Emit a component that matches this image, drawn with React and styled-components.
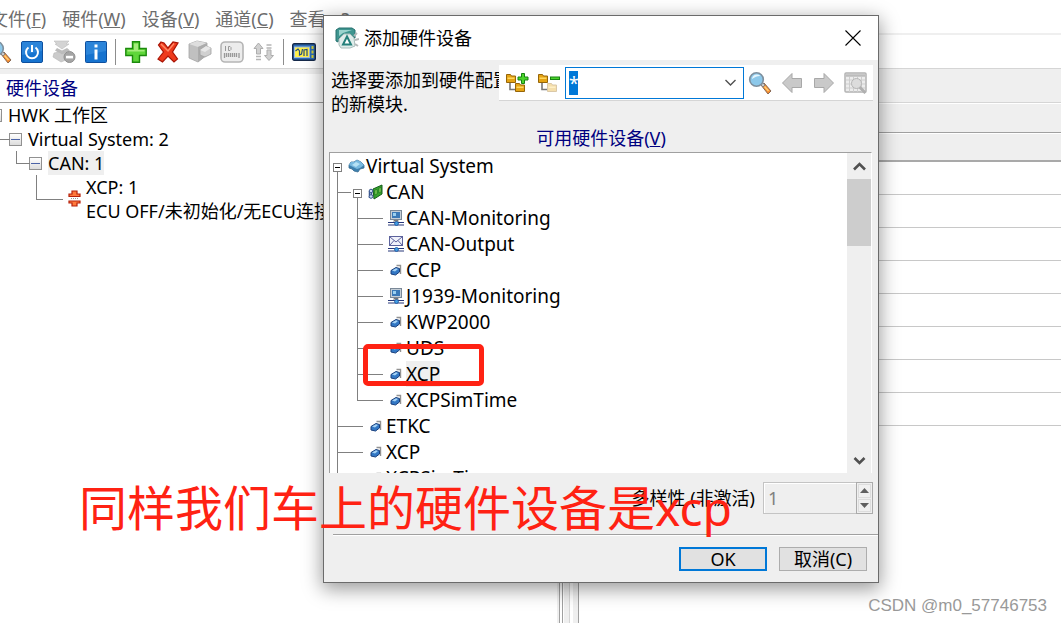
import React from 'react';
import styled, { createGlobalStyle, css } from 'styled-components';

const GlobalStyle = createGlobalStyle`
    * {
        box-sizing: border-box;
    }

    body {
        margin: 0;
        overflow: hidden;
        background: #fff;
        color: #000;
        font-family: 'Noto Sans', 'Noto Sans CJK SC', sans-serif;
        font-size: 18px;
        line-height: 24px;
    }

    button, input {
        font: inherit;
        color: inherit;
    }
`;

/* ---------- icons ---------- */

const SearchIcon = () => (
    <svg width="24" height="24" viewBox="0 0 24 24">
        <path d="M13 14l3-2 7 8-3 3z" fill="#f58a2c" stroke="#8a6a55" strokeWidth="1" />
        <path d="M12 13l2-2 3 3-2 2z" fill="#c9c9c9" stroke="#777" strokeWidth=".8" />
        <path d="M16.500 15.500l4 4.500" stroke="#ffd27a" strokeWidth="1.500" />
        <circle cx="8.500" cy="8.500" r="6.800" fill="#8cc8ea" stroke="#7d8f9d" strokeWidth="1.600" />
        <path d="M4 8a5 5 0 0 1 5-4.500c2 0 3 .8 3 1.500C9 5 7 6 4 8z" fill="#e4f5fd" />
    </svg>
);

const PowerIcon = () => (
    <svg width="22" height="22" viewBox="0 0 22 22">
        <rect x=".5" y=".5" width="21" height="21" rx="1.500" fill="#1673cf" stroke="#0d4f9e" />
        <path d="M1 1h20v9L1 14z" fill="#3b90e0" opacity=".6" />
        <path d="M7.500 6.500a6 6 0 1 0 7 0M11 4v7" fill="none" stroke="#fff" strokeWidth="2" />
    </svg>
);

const LayersOffIcon = () => (
    <svg width="24" height="24" viewBox="0 0 24 24">
        <path d="M2 1h15l-3 3h3l-7 5-7-5h2z" fill="#d4d4d4" stroke="#bdbdbd" strokeWidth=".6" />
        <path d="M5 8l5 2.500L15 8l3 2.500-8 4.500-7-4.500z" fill="#bcbcbc" />
        <path d="M2 13l5-1 3 2 4-2 4 2-4 6-5 2-8-5z" fill="#cbcbcb" stroke="#b5b5b5" strokeWidth=".6" />
        <circle cx="17.500" cy="17" r="5.500" fill="#a5a5a5" stroke="#8f8f8f" />
        <rect x="14" y="15.800" width="7" height="2.600" fill="#fff" />
    </svg>
);

const InfoIcon = () => (
    <svg width="22" height="22" viewBox="0 0 22 22">
        <rect x=".5" y=".5" width="21" height="21" rx="1" fill="#1673cf" stroke="#0d4f9e" />
        <path d="M1 1h20v9L1 14z" fill="#3b90e0" opacity=".6" />
        <rect x="9.500" y="3.500" width="3" height="3" fill="#fff" />
        <rect x="9.500" y="8.500" width="3" height="10" fill="#fff" />
    </svg>
);

const PlusIcon = () => (
    <svg width="22" height="22" viewBox="0 0 22 22">
        <path d="M7.500 .8h7v6.700h6.700v7h-6.700v6.700h-7v-6.700H.8v-7h6.700z" fill="#5fd63a" stroke="#1c8a0c" strokeWidth="1.400" />
        <path d="M9 2.500h4v6.500h6.500v1.500H2.500V9H9z" fill="#a5ec7c" />
    </svg>
);

const DeleteIcon = () => (
    <svg width="22" height="22" viewBox="0 0 22 22">
        <path d="M4 1l3 1 4 5 5-6 5 1-5.500 9 5 7-3.500 3-6-6-5.500 6L1 18l5.500-7L1.500 4z" fill="#ee3a1c" stroke="#a81405" strokeWidth="1.200" />
        <path d="M4 3l7 7 6-7.500" fill="none" stroke="#ff8a66" strokeWidth="1.500" />
    </svg>
);

const CubeIcon = () => (
    <svg width="24" height="24" viewBox="0 0 24 24">
        <path d="M1 4l8-3 10 2v12l-9 7-9-4z" fill="#c0c0c0" stroke="#a5a5a5" strokeWidth=".8" />
        <path d="M1 4l8-3 10 2-9 4z" fill="#dedede" />
        <path d="M10 7v15l9-7V3z" fill="#acacac" />
        <path d="M12 10l6-4 5 2v6l-6 3-5-2z" fill="#d0d0d0" stroke="#a0a0a0" strokeWidth=".8" />
        <path d="M12 10l6-4 5 2-6 4z" fill="#e8e8e8" />
    </svg>
);

const IdIcon = () => (
    <svg width="24" height="22" viewBox="0 0 24 22">
        <rect x="1" y="1" width="22" height="20" rx="4" fill="#ececec" stroke="#b5b5b5" strokeWidth="1.600" />
        <path d="M5.500 5v5M8.500 5.500v4h1.500l1-1v-2l-1-1z" fill="none" stroke="#999" />
        <path d="M4.500 12v5M6.500 12v4M8.500 12v4M10.500 12v4M12.500 12v4M14.500 12v4M16.500 12v4M19 12v5" stroke="#999" strokeWidth="1.300" />
    </svg>
);

const SwapIcon = () => (
    <svg width="22" height="20" viewBox="0 0 22 20">
        <path d="M5.500 1L10 6.500H7.500V12h-4V6.500H1z" fill="#d0d0d0" stroke="#adadad" />
        <path d="M3 14.500h5M3 17.500h5M13.500 3h5M13.500 6h5" stroke="#b5b5b5" strokeWidth="1.500" />
        <path d="M16 18.500l-4.500-5H14V8h4v5.500h2.500z" fill="#d0d0d0" stroke="#adadad" />
    </svg>
);

const ScopeIcon = () => (
    <svg width="24" height="18" viewBox="0 0 24 18">
        <rect x=".7" y=".7" width="22.600" height="16.600" rx="1.500" fill="#2f6cb4" stroke="#15294a" strokeWidth="1.400" />
        <rect x="2.500" y="4" width="15" height="10.500" fill="#fff04a" stroke="#9dbbe0" />
        <path d="M3.500 8l2.500-2 1.500 2v4l2-1 1-5M12 13V7l3-.5V13" fill="none" stroke="#244d80" strokeWidth="1.200" />
        <path d="M19.500 3h2v3h-2zM19.500 7.500h2v3h-2zM19.500 12h2v3h-2z" fill="#d6cf35" />
    </svg>
);

const FolderShape = ({ x, y, faded }) => (
    <g transform={`translate(${x} ${y})`} opacity={faded ? 0.35 : 1}>
        <path d="M.5 .5h4l1 1.500h4V8.500h-9z" fill="#e5a414" stroke="#966508" />
        <path d="M1.500 3.500h7V5h-7z" fill="#ffd75e" />
    </g>
);

const FolderTreeIcon = ({ minus }) => (
    <svg width="24" height="22" viewBox="0 0 24 22">
        <path d="M5 11v6.500h5" fill="none" stroke="#777" strokeWidth="1.600" />
        <FolderShape x="1" y="2" />
        <FolderShape x="10" y="11" faded={minus} />
        {minus ? (
            <rect x="13.500" y="5" width="9" height="2.500" fill="#4bd32b" stroke="#168311" />
        ) : (
            <path d="M16.500 1.500h3v3.500H23v3h-3.500v3.500h-3V8H13V5h3.500z" fill="#4bd32b" stroke="#168311" />
        )}
    </svg>
);

const ArrowIcon = ({ right }) => (
    <svg width="22" height="22" viewBox="0 0 22 22">
        <path
            d={right ? 'M1.500 6.500h9.500v-5L20.500 11 11 20.500v-5H1.500z' : 'M20.500 6.500H11v-5L1.500 11l9.500 9.500v-5h9.500z'}
            fill="#c9c9c9"
            stroke="#a8a8a8"
        />
    </svg>
);

const TableSearchIcon = () => (
    <svg width="24" height="22" viewBox="0 0 24 22">
        <rect x="1" y="1" width="21" height="19" rx="1" fill="#ececec" stroke="#b3b3b3" strokeWidth="1.500" />
        <path d="M2 3.500h19" stroke="#bcbcbc" strokeWidth="2.500" />
        <path d="M2 8h19M2 12h19M2 16h19M5.500 5v15M9.500 5v15M13.500 5v15M17.500 5v15" stroke="#cdcdcd" />
        <path d="M15.500 15l6 6" stroke="#b0b0b0" strokeWidth="3" />
        <circle cx="12.500" cy="11.500" r="5" fill="#dcdcdc" stroke="#b6b6b6" />
    </svg>
);

const AppIcon = () => (
    <svg width="24" height="22" viewBox="0 0 24 22">
        <path d="M1 3l3-2h13l3 2v8H4l-1 4-2-1z" fill="#3f958f" stroke="#26716f" />
        <path d="M4 3h13l-9 3-4 3z" fill="#9ad3cd" />
        <path d="M4 12l5-5h6l4 4 1 8-5 2H6l-2-3z" fill="#dfecea" stroke="#a9bdbb" />
        <path d="M12 9.500l4 8H8z" fill="#fff" stroke="#26807b" strokeWidth="2" />
        <path d="M19 9l3-3M20 13l4-1M20 17l3 2" stroke="#b5b9b9" strokeWidth="2" />
    </svg>
);

const SystemIcon = () => (
    <svg width="17" height="14" viewBox="0 0 17 14">
        <path d="M1 6l2-3 3 0 3-2 4 2 3 3v3l-4 1-2 3-4-1-2-2-3-1z" fill="#3d80ae" stroke="#386c92" strokeWidth=".8" />
        <path d="M1 6l2-3h3l3-2 4 2 3 3-4 3-3 1-4-2z" fill="#78b9df" />
        <path d="M4 6l4-3 4 2-4 3z" fill="#b6e2f5" />
    </svg>
);

const CanIcon = () => (
    <svg width="16" height="16" viewBox="0 0 16 16">
        <path d="M1.500 7v7M3.500 5v9" stroke="#39578f" strokeWidth="1.500" />
        <path d="M5 5l9-4v9l-8 5z" fill="#35a52a" stroke="#165c1d" />
        <path d="M7 6v5l2-1V5.500zM11 4v5l2-1V3.500z" fill="#8ee05d" stroke="#165c1d" strokeWidth=".6" />
        <circle cx="3" cy="7" r="1.800" fill="#c6d5ec" stroke="#39578f" />
        <circle cx="3" cy="12.500" r="1.800" fill="#c6d5ec" stroke="#39578f" />
    </svg>
);

const MonitorIcon = () => (
    <svg width="16" height="16" viewBox="0 0 16 16">
        <rect x="2.500" y=".5" width="11" height="9" fill="#c5ced6" stroke="#7a8897" />
        <rect x="4" y="2" width="8" height="6" fill="#3b79b7" />
        <path d="M5 3h3v3H5z" fill="#9cd1f0" />
        <path d="M6 10h4l1 1.500H5z" fill="#777" />
        <path d="M0 12.500h16M0 15h16" stroke="#28387b" strokeWidth="1.200" />
        <circle cx="8.500" cy="13.500" r="2" fill="#3f9be3" stroke="#1e569a" strokeWidth=".8" />
    </svg>
);

const OutputIcon = () => (
    <svg width="16" height="16" viewBox="0 0 16 16">
        <rect x="1.500" y=".5" width="13" height="9" fill="#f1f2fb" stroke="#5c629c" />
        <path d="M2 1l6 5 6-5M2 9l4-4.500M14 9l-4-4.500" fill="none" stroke="#5c629c" />
        <path d="M0 12.500h16M0 15h16" stroke="#28387b" strokeWidth="1.200" />
        <circle cx="8.500" cy="13.500" r="2" fill="#3f9be3" stroke="#1e569a" strokeWidth=".8" />
    </svg>
);

const DeviceIcon = () => (
    <svg width="12" height="12" viewBox="0 0 12 12">
        <path d="M6.500 1.500h4V10" fill="none" stroke="#929292" strokeWidth="1.400" />
        <path d="M1 6.500l5-3 3.500 1V8l-4 3L1 10z" fill="#3277c4" stroke="#193f7c" />
        <path d="M2 6.500l4-2.300 2 .8-3 2.500z" fill="#a6d3f5" />
    </svg>
);

const EcuIcon = () => (
    <svg width="13" height="18" viewBox="0 0 13 18">
        <path d="M4 1h5v3h3v2.500H1V4h3z" fill="#ff7a3d" stroke="#b5200b" strokeWidth="1.200" />
        <path d="M3 8.500h7" stroke="#9b9b9b" strokeDasharray="1 1" />
        <path d="M1 11h11v2H9v3H4v-3H1z" fill="#ff7a3d" stroke="#b5200b" strokeWidth="1.200" />
    </svg>
);

const CloseIcon = () => (
    <svg width="16" height="16" viewBox="0 0 16 16">
        <path d="M.5 .5l15 15M15.500 .5l-15 15" stroke="#000" strokeWidth="1.100" />
    </svg>
);

const Chevron = ({ up, bold }) => (
    <svg width="13" height="9" viewBox="0 0 13 9">
        <path d={up ? 'M1 7.500l5.500-5.500L12 7.500' : 'M1.500 2l5 5 5-5'} fill="none" stroke="#505050" strokeWidth={bold ? 2.6 : 1.4} />
    </svg>
);

const SpinArrow = ({ up }) => (
    <svg width="9" height="5" viewBox="0 0 9 5">
        <path d={up ? 'M0 5L4.500 0 9 5z' : 'M0 0l4.500 5L9 0z'} fill="#606060" />
    </svg>
);

/* ---------- main window ---------- */

const Window = styled.div`
    position: relative;
    display: flex;
    flex-direction: column;
    min-height: 100vh;
    overflow: hidden;
`;

const MenuBar = styled.nav`
    display: flex;
    gap: 16px;
    height: 35px;
    padding: 7px 0;
    margin-left: -10px;
    border-bottom: 2px solid #efefef;

    a {
        flex: none;
        color: #6d6d6d;
        text-decoration: none;
    }
`;

const ToolBar = styled.div`
    display: flex;
    align-items: center;
    height: 34px;
    margin-left: -16px;
    border-bottom: 1px solid #d5d5d5;
`;

const ToolButton = styled.button`
    display: flex;
    flex: none;
    align-items: center;
    justify-content: center;
    width: 32px;
    height: 32px;
    padding: 0;
    border: none;
    background: none;
`;

const ToolSeparator = styled.span`
    width: 8px;
    height: 26px;
    background: linear-gradient(#8d8d8d, #8d8d8d) 3px 0 / 1px 100% no-repeat;
`;

const Workspace = styled.div`
    display: flex;
    flex: 1;
`;

const HardwarePane = styled.section`
    flex: 0 1 557px;
    min-width: 0;
    border-top: 5px solid #efefef;
`;

const PaneTitle = styled.h2`
    height: 29px;
    margin: 0;
    padding: 2px 6px;
    border-bottom: 1px solid #a0a0a0;
    color: #000080;
    font-size: 18px;
    font-weight: 400;
    white-space: nowrap;
`;

const Splitter = styled.div`
    display: flex;
    flex: none;
    width: 22px;
    border-right: 1px solid #a0a0a0;
    background: #efefef;
`;

const SplitBar = styled.span`
    width: ${({ $width }) => $width}px;
    background: ${({ $color }) => $color};
`;

const SignalPane = styled.section`
    flex: 1;
`;

const HeaderStrip = styled.div`
    height: ${({ $height }) => $height}px;
    border-bottom: ${({ $line }) => $line};
    background: #efefef;

    & + & {
        border-top: 1px solid #fff;
    }
`;

const SignalRow = styled.div`
    height: 33px;
    border-bottom: 1px solid #c8c8c8;
`;

const WorkTree = styled.ul`
    margin: 0 0 0 -12px;
    padding: 0;
    list-style: none;
`;

const WorkRow = styled.li`
    display: flex;
    white-space: nowrap;
`;

const WorkGuide = styled.span`
    position: relative;
    flex: none;
    width: 20px;

    ${({ $reach }) => $reach && css`
        &::before {
            content: '';
            position: absolute;
            top: 0;
            left: 8px;
            width: ${$reach}px;
            height: 50%;
            border-left: 1px solid #808080;
            border-bottom: 1px solid #808080;
        }
    `}
`;

const WorkToggle = styled.button`
    width: 13px;
    height: 13px;
    margin: 6px 6px 5px 1px;
    padding: 0;
    border: 1px solid #919191;
    background:
        linear-gradient(#4b63a7, #4b63a7) center / 9px 1px no-repeat,
        linear-gradient(#fff, #dcdcdc);
`;

const WorkLabel = styled.span`
    background: ${({ $selected }) => ($selected ? '#efefef' : 'none')};
`;

const EcuSlot = styled.span`
    display: flex;
    align-items: center;
    justify-content: flex-end;
    width: 38px;
    padding-right: 5px;
`;

/* ---------- dialog ---------- */

const Dialog = styled.section`
    position: absolute;
    top: 15px;
    left: 323px;
    width: 556px;
    border: 1px solid #6b6b6b;
    background: #efefef;
    box-shadow: 0 5px 18px 1px rgba(0, 0, 0, 0.4);
`;

const TitleBar = styled.header`
    display: flex;
    align-items: center;
    height: 44px;
    padding: 0 9px 0 11px;
    background: #fff;

    h1 {
        flex: 1;
        margin: 0 0 0 5px;
        font-size: 18px;
        font-weight: 400;
    }
`;

const DialogTop = styled.div`
    display: flex;
    align-items: flex-start;
    padding: 5px 5px 0 7px;
`;

const Intro = styled.p`
    flex: 0 0 168px;
    margin: 3px 0 0;
    overflow: hidden;
    white-space: nowrap;
`;

const FindBar = styled.div`
    display: flex;
    flex: 1;
    align-items: center;
    min-width: 0;
    height: 36px;
    padding: 0 1px 0 2px;
    border-bottom: 1px solid #d5d5d5;
    background: #fff;
`;

const Combo = styled.div`
    display: flex;
    flex: 1;
    align-items: center;
    min-width: 0;
    height: 32px;
    padding: 0 6px 0 3px;
    border: 1px solid #0078d7;
    background: #fff;

    input {
        flex: 1;
        min-width: 0;
        height: 24px;
        padding: 0;
        border: none;
        outline: none;
        color: #fff;
        background: linear-gradient(#0078d7, #0078d7) 0 0 / 9px 24px no-repeat;
    }

    button {
        display: flex;
        padding: 0;
        border: none;
        background: none;
    }
`;

const ListCaption = styled.h2`
    margin: 10px 0 2px;
    color: #000080;
    font-size: 18px;
    font-weight: 400;
    text-align: center;
`;

const ListBox = styled.div`
    display: flex;
    height: 321px;
    margin: 0 6px 0 5px;
    border-top: 1px solid #a0a0a0;
    border-left: 1px solid #a0a0a0;
    border-right: 1px solid #fff;
    background: #fff;
`;

const DeviceTree = styled.ul`
    flex: 1;
    margin: 0;
    padding: 0;
    overflow: hidden;
    list-style: none;
`;

const DeviceRow = styled.li`
    display: flex;
    align-items: center;
    height: 26px;
    white-space: nowrap;
`;

const Guide = styled.span`
    position: relative;
    flex: none;
    align-self: stretch;
    width: 20px;

    &::before {
        content: '';
        position: absolute;
        top: 0;
        left: 7px;
        height: ${({ $last }) => ($last ? '14px' : '100%')};
        border-left: 1px solid #808080;
    }

    ${({ $reach }) => $reach && css`
        &::after {
            content: '';
            position: absolute;
            top: 13px;
            left: 7px;
            width: ${$reach}px;
            border-top: 1px solid #808080;
        }
    `}
`;

const Joint = styled.span`
    position: relative;
    flex: none;
    align-self: stretch;
    width: 16px;
    padding: 10px 3px 0;

    ${({ $open }) => $open && css`
        &::after {
            content: '';
            position: absolute;
            top: 19px;
            bottom: 0;
            left: 7px;
            border-left: 1px solid #808080;
        }
    `}
`;

const Toggle = styled.button`
    display: block;
    width: 9px;
    height: 9px;
    padding: 0;
    border: 1px solid #808080;
    background: linear-gradient(#000, #000) center / 5px 1px no-repeat #fff;
`;

const RowIcon = styled.span`
    display: flex;
    flex: none;
    align-items: center;
    justify-content: center;
    width: 20px;
`;

const DeviceLabel = styled.span`
    height: 26px;
    font-size: 19px;
    line-height: 26px;
    background: ${({ $selected }) => ($selected ? '#efefef' : 'none')};
`;

const ScrollBar = styled.div`
    display: flex;
    flex-direction: column;
    width: 24px;
    background: #efefef;

    button {
        display: flex;
        align-items: center;
        justify-content: center;
        height: 26px;
        padding: 0;
        border: none;
        background: none;
    }
`;

const ScrollTrack = styled.div`
    flex: 1;

    &::before {
        content: '';
        display: block;
        height: 67px;
        background: #cdcdcd;
    }
`;

const CountRow = styled.div`
    display: flex;
    align-items: center;
    justify-content: flex-end;
    height: 32px;
    margin: 9px 5px 0 0;

    label {
        margin-right: 8px;
    }

    input {
        width: 93px;
        height: 32px;
        padding: 0 4px;
        border: 1px solid #c4c4c4;
        border-right: none;
        background: #efefef;
        color: #808080;
        box-shadow: inset 1px 1px #fff;
    }
`;

const Spinner = styled.div`
    display: flex;
    flex-direction: column;
    gap: 1px;
    width: 17px;
    height: 32px;
    padding: 1px;
    border: 1px solid #ababab;

    button {
        display: flex;
        flex: 1;
        align-items: center;
        justify-content: center;
        padding: 0;
        border: 1px solid #dcdcdc;
        background: #f0f0f0;
    }
`;

const Footer = styled.footer`
    display: flex;
    justify-content: flex-end;
    gap: 12px;
    margin: 20px 0 0 9px;
    padding: 12px 11px 11px 0;
    border-top: 1px solid #a0a0a0;
    box-shadow: inset 0 1px #fff;
`;

const DialogButton = styled.button`
    width: 88px;
    height: 24px;
    padding: 0;
    border: ${({ $primary }) => ($primary ? '2px solid #0078d7' : '1px solid #adadad')};
    background: #e1e1e1;
    line-height: 20px;
`;

/* ---------- notes drawn over the windows ---------- */

const MarkBox = styled.div`
    position: absolute;
    top: 344px;
    left: 363px;
    width: 121px;
    height: 42px;
    border: 5px solid #ff2213;
    border-radius: 5px;
`;

const MarkText = styled.p`
    position: absolute;
    top: 476px;
    left: 79px;
    margin: 0;
    color: #ff2213;
    font-size: 48px;
    line-height: 64px;
    white-space: nowrap;
`;

const Watermark = styled.span`
    position: absolute;
    right: 14px;
    bottom: 5px;
    color: #999;
    font-family: 'Liberation Sans', sans-serif;
    font-size: 17px;
`;

const menus = [
    { text: '文件', hotkey: 'F' },
    { text: '硬件', hotkey: 'W' },
    { text: '设备', hotkey: 'V' },
    { text: '通道', hotkey: 'C' },
    { text: '查看' },
    { text: '?' },
];

const devices = [
    { name: 'Virtual System', depth: 0, icon: SystemIcon, open: true },
    { name: 'CAN', depth: 1, icon: CanIcon, open: true },
    { name: 'CAN-Monitoring', depth: 2, icon: MonitorIcon },
    { name: 'CAN-Output', depth: 2, icon: OutputIcon },
    { name: 'CCP', depth: 2, icon: DeviceIcon },
    { name: 'J1939-Monitoring', depth: 2, icon: MonitorIcon },
    { name: 'KWP2000', depth: 2, icon: DeviceIcon },
    { name: 'UDS', depth: 2, icon: DeviceIcon },
    { name: 'XCP', depth: 2, icon: DeviceIcon, selected: true },
    { name: 'XCPSimTime', depth: 2, icon: DeviceIcon, last: true },
    { name: 'ETKC', depth: 1, icon: DeviceIcon },
    { name: 'XCP', depth: 1, icon: DeviceIcon },
    { name: 'XCPSimTime', depth: 1, icon: DeviceIcon },
];

function Device({ name, depth, icon: Icon, open, last, selected }) {
    return (
        <DeviceRow>
            {Array.from({ length: depth }, (_, i) => {
                const own = i === depth - 1;
                return <Guide key={i} $last={own && last} $reach={own ? (open ? 14 : 26) : 0} />;
            })}
            <Joint $open={open}>{open && <Toggle aria-label={name} />}</Joint>
            <RowIcon><Icon /></RowIcon>
            <DeviceLabel $selected={selected}>{name}</DeviceLabel>
        </DeviceRow>
    );
}

function AddDeviceDialog() {
    const [filter, setFilter] = React.useState('*');

    return (
        <Dialog role="dialog" aria-labelledby="dialog-title">
            <TitleBar>
                <AppIcon />
                <h1 id="dialog-title">添加硬件设备</h1>
                <ToolButton aria-label="关闭"><CloseIcon /></ToolButton>
            </TitleBar>
            <DialogTop>
                <Intro>选择要添加到硬件配置<br />的新模块.</Intro>
                <FindBar>
                    <ToolButton aria-label="展开"><FolderTreeIcon /></ToolButton>
                    <ToolButton aria-label="折叠"><FolderTreeIcon minus /></ToolButton>
                    <Combo>
                        <input aria-label="查找" value={filter} onChange={(e) => setFilter(e.target.value)} />
                        <button aria-label="历史"><Chevron /></button>
                    </Combo>
                    <ToolButton aria-label="搜索"><SearchIcon /></ToolButton>
                    <ToolButton aria-label="上一个"><ArrowIcon /></ToolButton>
                    <ToolButton aria-label="下一个"><ArrowIcon right /></ToolButton>
                    <ToolButton aria-label="列表"><TableSearchIcon /></ToolButton>
                </FindBar>
            </DialogTop>
            <ListCaption>可用硬件设备(<u>V</u>)</ListCaption>
            <ListBox>
                <DeviceTree>
                    {devices.map((device, i) => <Device key={i} {...device} />)}
                </DeviceTree>
                <ScrollBar>
                    <button aria-label="向上"><Chevron up bold /></button>
                    <ScrollTrack />
                    <button aria-label="向下"><Chevron bold /></button>
                </ScrollBar>
            </ListBox>
            <CountRow>
                <label htmlFor="count">多样性 (非激活)</label>
                <input id="count" defaultValue="1" disabled />
                <Spinner>
                    <button aria-label="增加"><SpinArrow up /></button>
                    <button aria-label="减少"><SpinArrow /></button>
                </Spinner>
            </CountRow>
            <Footer>
                <DialogButton $primary>OK</DialogButton>
                <DialogButton>取消(C)</DialogButton>
            </Footer>
        </Dialog>
    );
}

function App() {
    return (
        <Window>
            <GlobalStyle />
            <MenuBar>
                {menus.map(({ text, hotkey }) => (
                    <a href="#menu" key={text}>{text}{hotkey && <>(<u>{hotkey}</u>)</>}</a>
                ))}
            </MenuBar>
            <ToolBar>
                <ToolButton aria-label="搜索"><SearchIcon /></ToolButton>
                <ToolButton aria-label="电源"><PowerIcon /></ToolButton>
                <ToolButton aria-label="断开"><LayersOffIcon /></ToolButton>
                <ToolButton aria-label="信息"><InfoIcon /></ToolButton>
                <ToolSeparator />
                <ToolButton aria-label="添加"><PlusIcon /></ToolButton>
                <ToolButton aria-label="删除"><DeleteIcon /></ToolButton>
                <ToolButton aria-label="模块"><CubeIcon /></ToolButton>
                <ToolButton aria-label="标识"><IdIcon /></ToolButton>
                <ToolButton aria-label="交换"><SwapIcon /></ToolButton>
                <ToolSeparator />
                <ToolButton aria-label="示波器"><ScopeIcon /></ToolButton>
            </ToolBar>
            <Workspace>
                <HardwarePane>
                    <PaneTitle>硬件设备</PaneTitle>
                    <WorkTree>
                        <WorkRow>
                            <WorkToggle aria-label="HWK" />
                            <WorkLabel>HWK 工作区</WorkLabel>
                        </WorkRow>
                        <WorkRow>
                            <WorkGuide $reach={13} />
                            <WorkToggle aria-label="Virtual System" />
                            <WorkLabel>Virtual System: 2</WorkLabel>
                        </WorkRow>
                        <WorkRow>
                            <WorkGuide />
                            <WorkGuide $reach={13} />
                            <WorkToggle aria-label="CAN" />
                            <WorkLabel $selected>CAN: 1</WorkLabel>
                        </WorkRow>
                        <WorkRow>
                            <WorkGuide />
                            <WorkGuide />
                            <WorkGuide $reach={26} />
                            <EcuSlot><EcuIcon /></EcuSlot>
                            <WorkLabel>XCP: 1<br />ECU OFF/未初始化/无ECU连接</WorkLabel>
                        </WorkRow>
                    </WorkTree>
                </HardwarePane>
                <Splitter>
                    <SplitBar $width={2} $color="#efefef" />
                    <SplitBar $width={1} $color="#a0a0a0" />
                    <SplitBar $width={2} $color="#fff" />
                    <SplitBar $width={1} $color="#a0a0a0" />
                    <SplitBar $width={1} $color="#fff" />
                    <SplitBar $width={5} $color="#efefef" />
                    <SplitBar $width={1} $color="#d5d5d5" />
                    <SplitBar $width={3} $color="#fff" />
                </Splitter>
                <SignalPane>
                    <HeaderStrip $height={34} $line="1px solid #d5d5d5" />
                    <HeaderStrip $height={30} $line="1px solid #a0a0a0" />
                    <HeaderStrip $height={29} $line="2px solid #a9a9a9" />
                    {Array.from({ length: 8 }, (_, i) => <SignalRow key={i} />)}
                </SignalPane>
            </Workspace>
            <AddDeviceDialog />
            <MarkBox />
            <MarkText>同样我们车上的硬件设备是xcp</MarkText>
            <Watermark>CSDN @m0_57746753</Watermark>
        </Window>
    );
}

export default App;
